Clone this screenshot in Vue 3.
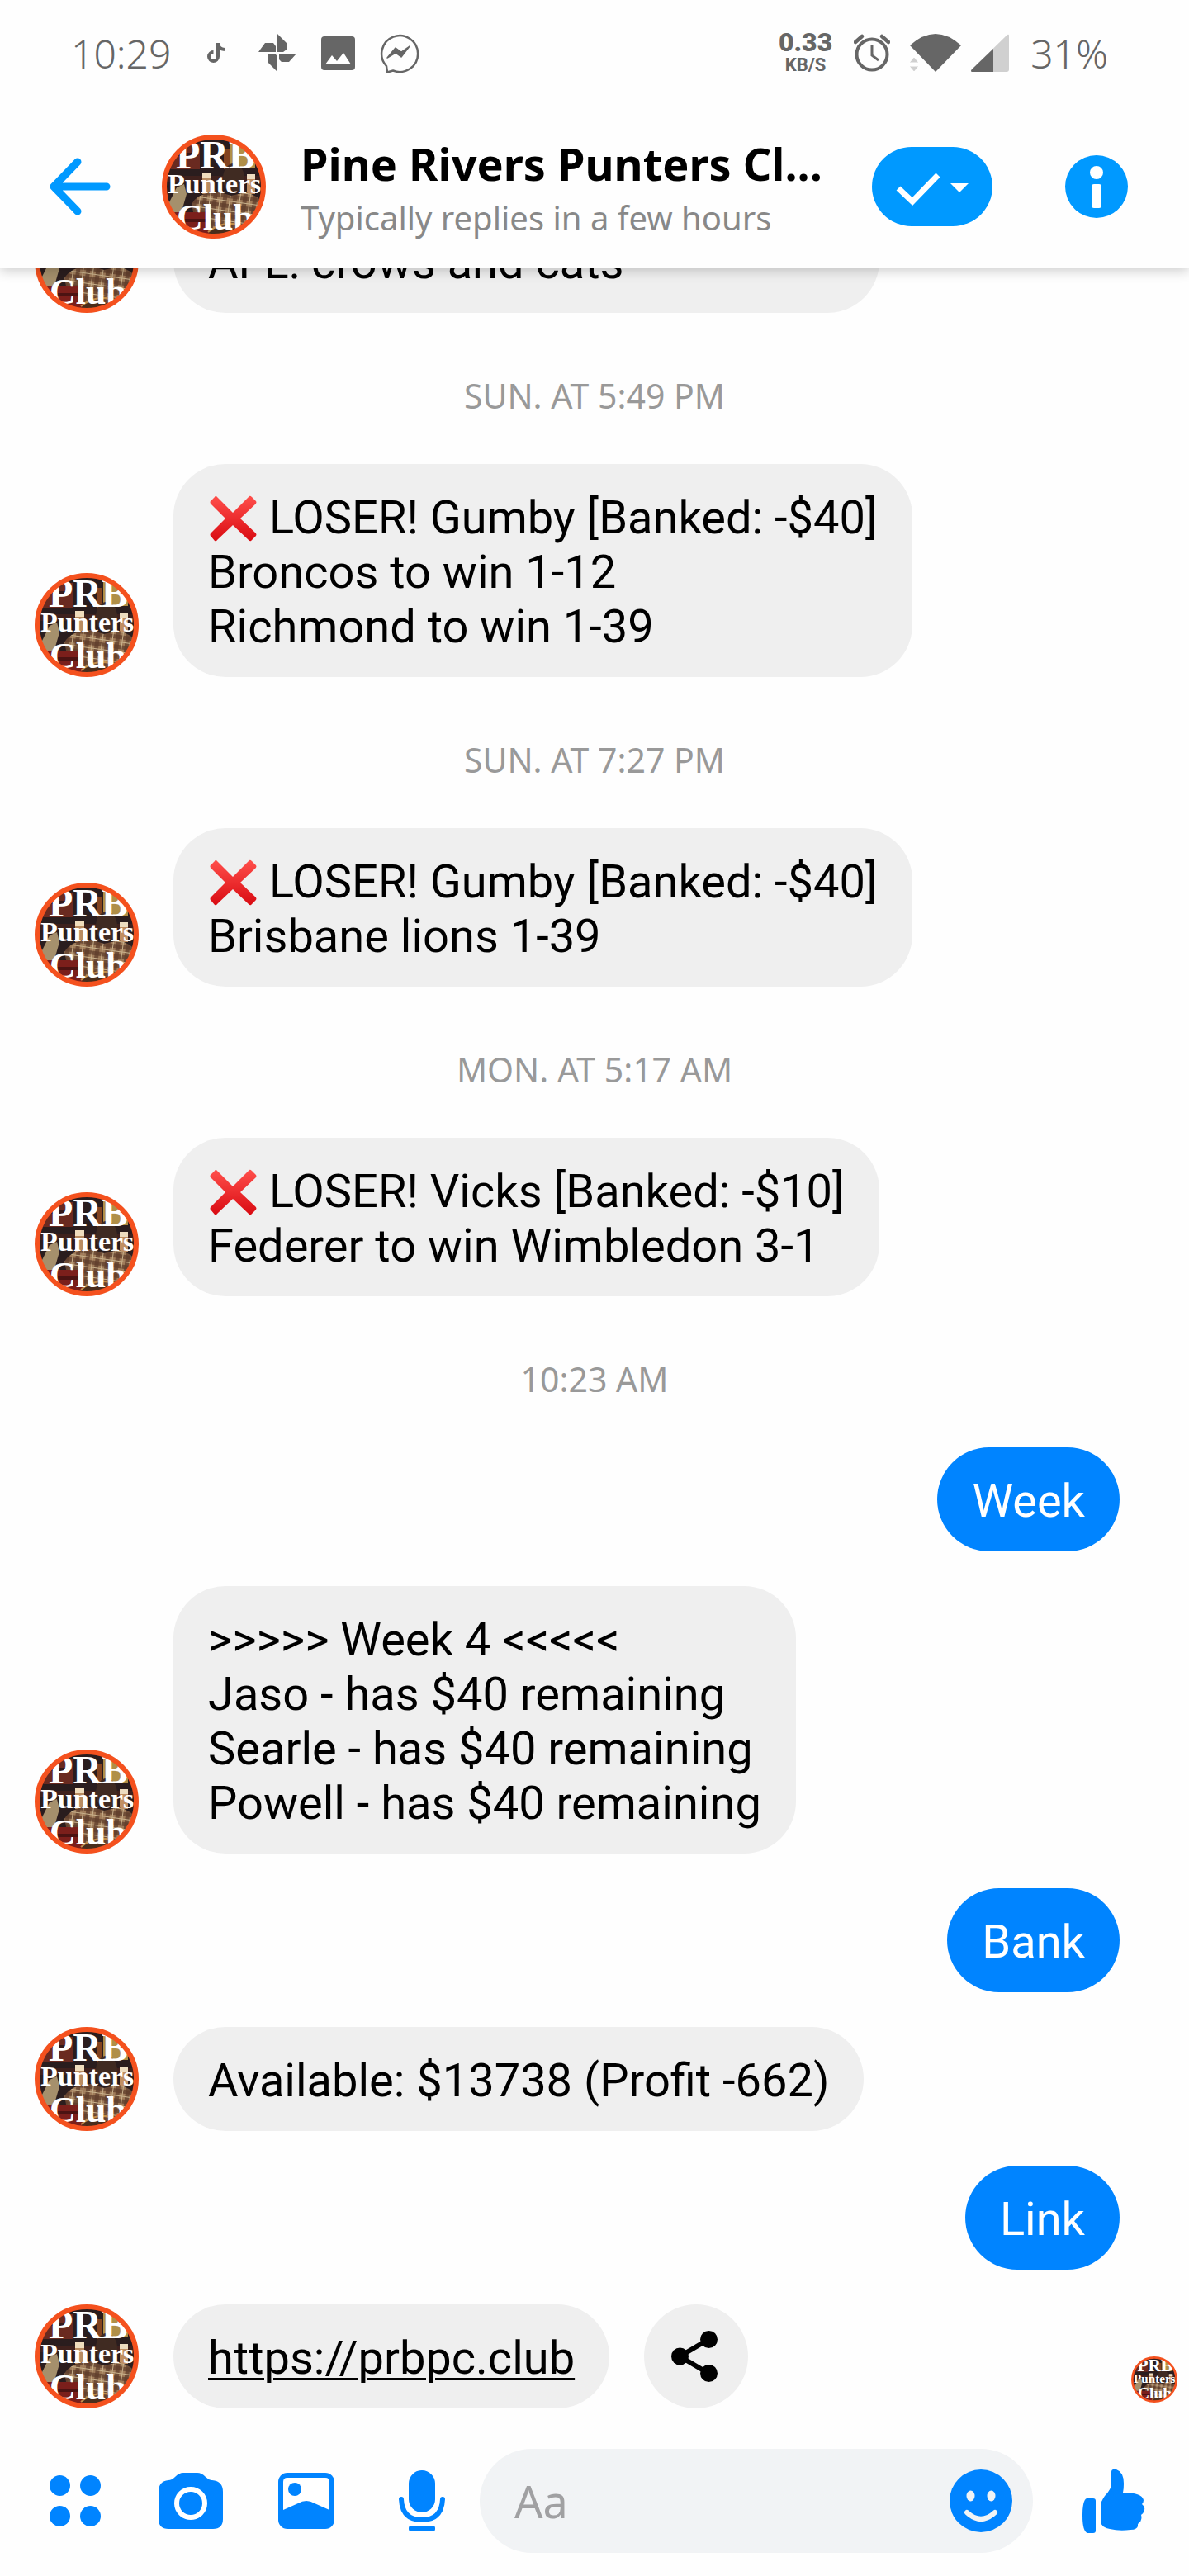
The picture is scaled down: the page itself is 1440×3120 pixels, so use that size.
<script setup>
const feed = [
  { type: 'in', lines: ['AFL: crows and cats'], wide: true },
  { type: 'time', text: 'SUN. AT 5:49 PM' },
  { type: 'in', cross: true, lines: ['LOSER! Gumby [Banked: -$40]', 'Broncos to win 1-12', 'Richmond to win 1-39'] },
  { type: 'time', text: 'SUN. AT 7:27 PM' },
  { type: 'in', cross: true, lines: ['LOSER! Gumby [Banked: -$40]', 'Brisbane lions 1-39'] },
  { type: 'time', text: 'MON. AT 5:17 AM' },
  { type: 'in', cross: true, lines: ['LOSER! Vicks [Banked: -$10]', 'Federer to win Wimbledon 3-1'] },
  { type: 'time', text: '10:23 AM' },
  { type: 'out', lines: ['Week'] },
  { type: 'in', lines: ['>>>>> Week 4 <<<<<', 'Jaso - has $40 remaining', 'Searle - has $40 remaining', 'Powell - has $40 remaining'] },
  { type: 'out', lines: ['Bank'] },
  { type: 'in', lines: ['Available: $13738 (Profit -662)'] },
  { type: 'out', lines: ['Link'] },
  { type: 'in', link: 'https://prbpc.club', lines: [] },
]
</script>

<template>
  <div class="app">
    <svg class="defs" width="0" height="0" aria-hidden="true">
      <defs>
        <linearGradient id="crossFill" x1="0" y1="0" x2="0" y2="1">
          <stop offset="0" stop-color="#ff4f4b" />
          <stop offset="1" stop-color="#d90b12" />
        </linearGradient>
        <pattern id="plaid" width="12" height="12" patternUnits="userSpaceOnUse" patternTransform="rotate(8)">
          <rect width="12" height="12" fill="#a07c5a" />
          <rect width="5" height="12" fill="#5f3d2a" opacity="0.75" />
          <rect width="12" height="5" fill="#5f3d2a" opacity="0.75" />
          <path d="M8.500 0V12M0 8.500H12" stroke="#c9b28c" stroke-width="1" />
        </pattern>
        <clipPath id="disc"><circle cx="63" cy="63" r="60" /></clipPath>
        <symbol id="club" viewBox="0 0 126 126">
          <g clip-path="url(#disc)">
            <rect width="126" height="126" fill="#2a1d1e" />
            <rect x="8" y="12" width="38" height="30" fill="#6a2a20" />
            <rect x="8" y="22" width="36" height="4" fill="#34191a" />
            <rect x="83" y="6" width="30" height="34" fill="#b08f48" />
            <path d="M75 18h7v24h-7z" fill="#84441f" />
            <rect x="0" y="50" width="126" height="8" fill="#3f211d" />
            <path d="M49 48h11v24h-11z" fill="#b98c61" />
            <path d="M49 46h11v7h-11z" fill="#f0ddbd" />
            <path d="M103 50h10v22h-10z" fill="#c08f63" />
            <path d="M103 48h10v6h-10z" fill="#eddcc0" />
            <ellipse cx="87" cy="53" rx="13" ry="18" fill="#402b22" />
            <path d="M36 84q8-14 32-15l16 5 18-4q22 6 24 22v40H46z" fill="url(#plaid)" />
            <path d="M4 92l14-28 9-4 3 12-8 28z" fill="#a5906c" />
            <rect x="10" y="94" width="48" height="32" fill="#7b1f1b" />
            <path d="M12 104h44" stroke="#4b1312" stroke-width="4" />
            <path d="M52 126l10-13 42 2-4 11z" fill="#4a2d1b" />
            <path d="M56 118q22-18 50-4" fill="none" stroke="#c08d4b" stroke-width="2" />
            <g fill="#fff" font-family="'Liberation Serif', serif" font-weight="700">
              <text x="17" y="41" font-size="48">PRB</text>
              <text x="7" y="71" font-size="34">Punters</text>
              <text x="18" y="115" font-size="44">Club</text>
            </g>
          </g>
          <circle cx="63" cy="63" r="60" fill="none" stroke="#f4511e" stroke-width="6" />
        </symbol>
      </defs>
    </svg>

    <div class="status">
      <span class="clock">10:29</span>
      <svg class="tiktok" width="22" height="26" viewBox="0 0 22 26"><path d="M13 1v16.500a5.500 5.500 0 1 1-5.500-5.500M13 2q1 6.500 8 7" fill="none" stroke="#666" stroke-width="4" /></svg>
      <svg class="fan" width="46" height="46" viewBox="0 0 46 46" fill="#666"><path d="M23 0 34 11v8l-4 3h-7zM0 22 8 11h10l3 4v7zM25 24h21L37 34H28l-3-3zM11 24h9l3 3v19L11 34z" /></svg>
      <svg class="pic" width="41" height="41" viewBox="0 0 41 41"><rect width="41" height="41" rx="4" fill="#666" /><path d="M5 34 13 23l6 7 8-10 9 14z" fill="#fff" /></svg>
      <svg class="msgr" width="50" height="50" viewBox="0 0 50 50"><path d="M10 41A22 22 0 1 1 18 46.500L11 48.500z" fill="none" stroke="#666" stroke-width="2.500" stroke-linejoin="round" /><path d="M11 31 21 19l7 5 10-7-10 13-7-5z" fill="#666" stroke="#666" stroke-width="1.500" stroke-linejoin="round" /></svg>
      <span class="rate"><b>0.33</b><small>KB/S</small></span>
      <svg class="alarm" width="44" height="46" viewBox="0 0 44 46" fill="none" stroke="#666" stroke-width="4"><circle cx="22" cy="25" r="18.500" /><path d="M22 14v12l8 6" stroke-width="3" /><path d="M2 10 10 3M42 10 34 3" stroke-width="4.500" stroke-linecap="round" /></svg>
      <svg class="wifi" width="66" height="46" viewBox="0 0 66 46"><path d="M2 14q31-28 62 0L33 46z" fill="#666" /><path d="M1 35 7 28l6 7zM1 39h12l-6 7z" fill="#d0d0d0" stroke="#fff" /></svg>
      <svg class="cell" width="46" height="46" viewBox="0 0 46 46"><path d="M1 46Q-1 45 1 43L44 1q2-1 2 1v41q0 3-3 3z" fill="#d0d0d0" /><path d="M1 46Q-1 45 1 43L27 18v28z" fill="#666" /></svg>
      <span class="battery">31%</span>
    </div>

    <header class="bar">
      <button class="plain" aria-label="Back">
        <svg width="74" height="70" viewBox="0 0 74 70" fill="none" stroke="#0099ff" stroke-width="9" stroke-linecap="round" stroke-linejoin="round"><path d="M69 35H6M34 5 5 35l29 30" /></svg>
      </button>
      <svg class="avatar lead" role="img" aria-label="Pine Rivers Punters Club"><use href="#club" /></svg>
      <div class="heading">
        <h1>Pine Rivers Punters Cl...</h1>
        <p>Typically replies in a few hours</p>
      </div>
      <button class="done" aria-label="Mark as done">
        <svg width="146" height="96" viewBox="0 0 146 96"><path d="M32 50 49 66 80 34" fill="none" stroke="#fff" stroke-width="7" /><path d="M95 44h22l-11 11z" fill="#fff" /></svg>
      </button>
      <button class="plain info" aria-label="Details">
        <svg width="76" height="76" viewBox="0 0 76 76"><circle cx="38" cy="38" r="38" fill="#0099ff" /><circle cx="38" cy="21" r="8" fill="#fff" /><rect x="32" y="35" width="12" height="29" rx="3" fill="#fff" /></svg>
      </button>
    </header>

    <main class="feed">
      <template v-for="(item, i) in feed" :key="i">
        <time v-if="item.type === 'time'" class="stamp">{{ item.text }}</time>
        <div v-else class="row" :class="item.type">
          <svg v-if="item.type === 'in'" class="avatar" aria-hidden="true"><use href="#club" /></svg>
          <div class="bubble" :class="{ wide: item.wide }">
            <a v-if="item.link" :href="item.link">{{ item.link }}</a>
            <p v-for="(line, n) in item.lines" :key="n"><svg v-if="item.cross && n === 0" class="cross" viewBox="0 0 60 56" role="img" aria-label="Cross mark"><path d="M10 1 30 21 50 1Q51 0 53 2L58 7Q59 8 58 10L39 28 58 46Q59 48 58 49L52 55Q51 56 49 54L30 36 11 54Q10 56 8 55L3 49Q2 48 3 46L21 28 3 10Q2 8 3 7L8 2Q9 0 10 1z" fill="url(#crossFill)" /></svg><template v-if="item.cross && n === 0">&nbsp;</template>{{ line }}</p>
          </div>
          <template v-if="item.link">
            <button class="share" aria-label="Share">
              <svg width="56" height="62" viewBox="0 0 56 62"><path d="M45 10.500 10.500 31 45 51.500" fill="none" stroke="#000" stroke-width="6" /><circle cx="10.500" cy="31" r="10.500" /><circle cx="45.500" cy="10.500" r="10.500" /><circle cx="45.500" cy="51.500" r="10.500" /></svg>
            </button>
            <svg class="seen" role="img" aria-label="Seen"><use href="#club" /></svg>
          </template>
        </div>
      </template>
    </main>

    <form class="composer" @submit.prevent>
      <button type="button" class="tool" aria-label="More">
        <svg width="62" height="62" viewBox="0 0 62 62" fill="#0084ff"><circle cx="12.500" cy="12.500" r="12.500" /><circle cx="49.500" cy="12.500" r="12.500" /><circle cx="12.500" cy="49.500" r="12.500" /><circle cx="49.500" cy="49.500" r="12.500" /></svg>
      </button>
      <button type="button" class="tool" aria-label="Camera">
        <svg width="78" height="68" viewBox="0 0 78 68"><path d="M12 9q4 0 8-4 5-5 10-5h17q5 0 10 5 4 4 8 4 13 1 13 14v33q0 12-12 12H12Q0 68 0 56V23Q0 10 12 9z" fill="#0084ff" /><circle cx="39" cy="37" r="17" fill="#0084ff" stroke="#fff" stroke-width="6" /></svg>
      </button>
      <button type="button" class="tool" aria-label="Gallery">
        <svg width="68" height="68" viewBox="0 0 68 68"><rect width="68" height="68" rx="11" fill="#0084ff" /><path d="M6 45V11q0-5 5-5h46q5 0 5 5v34L44 37q-10-6-20 0z" fill="#fff" /><circle cx="20" cy="20" r="8" fill="#0084ff" /></svg>
      </button>
      <button type="button" class="tool" aria-label="Voice">
        <svg width="56" height="74" viewBox="0 0 56 74"><rect x="12" width="32" height="51" rx="16" fill="#0084ff" /><path d="M3 35q1 25 25 25t25-25" fill="none" stroke="#0084ff" stroke-width="6" stroke-linecap="round" /><rect x="12" y="67" width="32" height="7" rx="3" fill="#0084ff" /></svg>
      </button>
      <div class="field">
        <input type="text" placeholder="Aa" aria-label="Message" />
        <button type="button" class="plain" aria-label="Emoji">
          <svg width="76" height="76" viewBox="0 0 76 76"><circle cx="38" cy="38" r="38" fill="#0084ff" /><ellipse cx="25.500" cy="32" rx="5" ry="6.500" fill="#f1f3f5" /><ellipse cx="50.500" cy="32" rx="5" ry="6.500" fill="#f1f3f5" /><path d="M21 52q17 16 34 0" fill="none" stroke="#f1f3f5" stroke-width="6" stroke-linecap="round" /></svg>
        </button>
      </div>
      <button type="button" class="like" aria-label="Like">
        <svg width="76" height="78" viewBox="0 0 76 78" fill="#0084ff"><path d="M5 36h8q3 0 3 3v36q0 3-3 3H6Q0 76 0 57 0 38 5 36z" /><path d="M35 4Q35 0 41 1Q50 4 50 18Q50 25 49 29Q72 29 74 38Q74 41 72 43Q76 46 75 50Q74 54 71 56Q73 63 67 67Q68 74 58 74Q45 76 33 73Q22 71 22 63V45Q22 40 27 33Q35 25 35 18z" /></svg>
      </button>
    </form>
  </div>
</template>

<style>
body {
  margin: 0;
  background: #fefefe;
}
</style>

<style scoped>
.app {
  display: flex;
  flex-direction: column;
  height: 100vh;
  overflow: hidden;
  background: #fefefe;
  color: #000;
  font-family: "Noto Sans", sans-serif;
}
.defs { position: absolute; }
svg { display: block; flex: none; }
button {
  flex: none;
  box-sizing: border-box;
  border: 0;
  padding: 0;
  background: none;
  display: flex;
  align-items: center;
  justify-content: center;
}
h1, p { margin: 0; }

.status {
  flex: none;
  position: relative;
  z-index: 2;
  height: 128px;
  display: flex;
  align-items: center;
  padding: 0 98px 0 86px;
  background: #fefefe;
  color: #666;
  font-size: 48px;
  font-weight: 300;
}
.tiktok { margin-left: 44px; }
.fan { margin-left: 40px; }
.pic { margin-left: 30px; }
.msgr { margin-left: 28px; }
.rate {
  margin-left: auto;
  display: flex;
  flex-direction: column;
  align-items: center;
  font-family: Roboto, sans-serif;
  font-weight: 700;
}
.rate b { font-size: 32px; line-height: 30px; }
.rate small { font-size: 22px; line-height: 26px; }
.alarm { margin-left: 26px; }
.wifi { margin-left: 22px; }
.cell { margin-left: 10px; }
.battery { margin-left: 26px; }

.bar {
  flex: none;
  position: relative;
  z-index: 1;
  height: 196px;
  display: flex;
  align-items: center;
  padding: 0 74px 0 60px;
  background: #fefefe;
  box-shadow: 0 4px 14px rgba(0, 0, 0, 0.2);
}
.avatar { width: 126px; height: 126px; }
.lead { margin-left: 62px; }
.heading {
  flex: 1;
  min-width: 0;
  margin-left: 42px;
  white-space: nowrap;
}
.heading h1 { font-size: 54px; line-height: 76px; font-weight: 700; }
.heading p { font-size: 40px; line-height: 56px; color: #888; }
.done { height: 96px; border-radius: 48px; background: #0099ff; }
.info { margin-left: 88px; }

.feed {
  flex: 1;
  min-height: 0;
  display: flex;
  flex-direction: column;
  justify-content: flex-end;
  padding-bottom: 49px;
}
.stamp {
  flex: none;
  box-sizing: border-box;
  height: 183px;
  padding-top: 16px;
  display: flex;
  align-items: center;
  justify-content: center;
  font-size: 41px;
  color: #999;
}
.row {
  flex: none;
  display: flex;
  align-items: flex-end;
  padding: 0 14px 0 42px;
}
.row + .row { margin-top: 42px; }
.row.out { justify-content: flex-end; padding-right: 84px; }
.bubble {
  box-sizing: border-box;
  padding: 32px 42px 28px;
  border-radius: 63px;
  background: #efefef;
  font-family: Roboto, sans-serif;
  font-size: 56px;
  line-height: 66px;
}
.bubble p { white-space: nowrap; }
.bubble a { display: block; color: #000; text-underline-offset: 5px; text-decoration-thickness: 3px; }
.in .bubble { margin-left: 42px; }
.out .bubble { background: #0084ff; color: #fff; }
.wide { min-width: 855px; }
.cross {
  display: inline-block;
  width: 60px;
  height: 56px;
  vertical-align: -10px;
}
.share {
  width: 126px;
  height: 126px;
  margin-left: 42px;
  padding-right: 4px;
  border-radius: 63px;
  background: #efefef;
}
.seen { width: 56px; height: 56px; margin: 0 0 7px auto; }

.composer {
  flex: none;
  display: flex;
  align-items: center;
  padding: 0 0 28px 21px;
}
.tool { width: 140px; height: 126px; }
.field {
  flex: 1;
  min-width: 0;
  height: 126px;
  display: flex;
  align-items: center;
  padding: 0 25px 0 42px;
  box-sizing: border-box;
  border-radius: 63px;
  background: #f1f3f5;
}
.field input {
  flex: 1;
  min-width: 0;
  border: 0;
  padding: 0;
  outline: 0;
  background: none;
  font-family: "Noto Sans", sans-serif;
  font-size: 54px;
}
.field input::placeholder { color: #a0a0a2; opacity: 1; }
.like { width: 189px; height: 126px; padding-left: 6px; }
</style>
